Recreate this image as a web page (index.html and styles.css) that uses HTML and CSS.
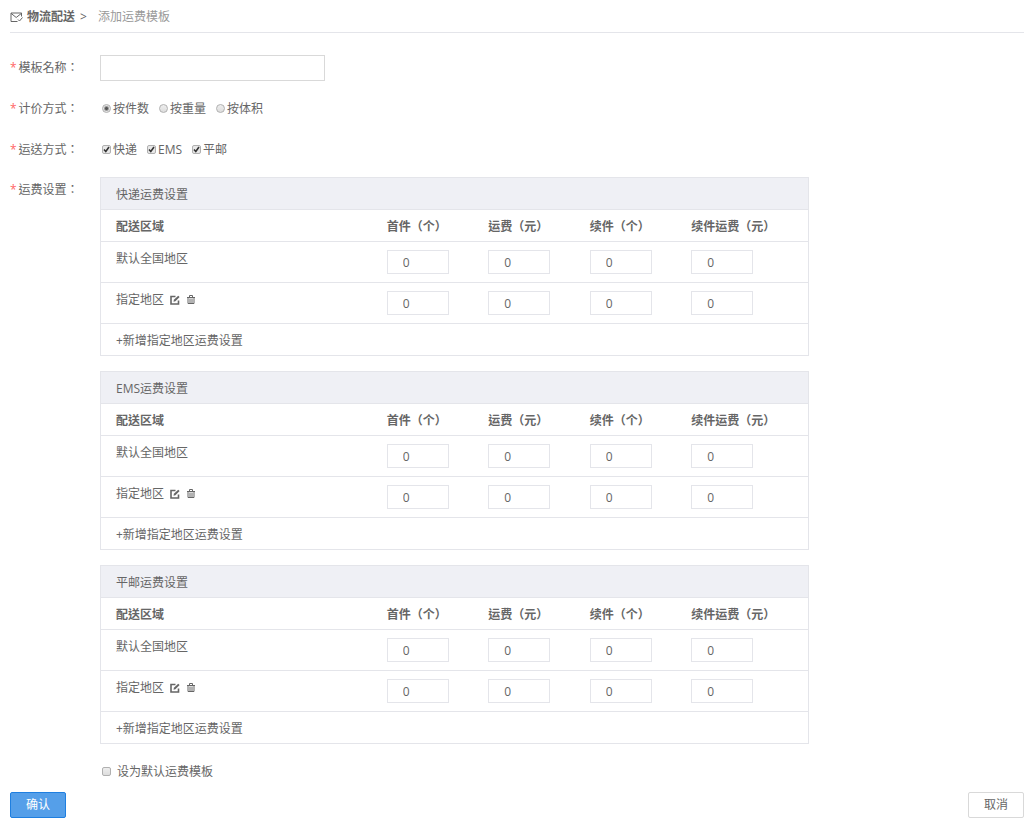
FILE: index.html
```html
<!DOCTYPE html>
<html lang="zh-CN">
<head>
  <meta charset="UTF-8">
  <meta name="viewport" content="width=device-width, initial-scale=1.0">
  <title>添加运费模板</title>
  <link rel="stylesheet" href="styles.css">
</head>
<body>

<svg class="sprite" aria-hidden="true">
  <symbol id="icon-edit" viewBox="0 0 10 10">
    <path d="M5.500 1.500H1V9h7.500V5.500" fill="none" stroke="currentColor" stroke-width="1.600"/>
    <path d="M3.500 6.800l.4-2L8.200.8l1.400 1.300-4.200 4.100z" fill="currentColor"/>
  </symbol>
  <symbol id="icon-trash" viewBox="0 0 10 10">
    <path d="M1 2.500h8M3.500 2V.5h3V2M2 2.500v6h6v-6M4 3.500V8M6 3.500V8" fill="none" stroke="currentColor"/>
  </symbol>
</svg>

<div class="page">
  <div class="crumb">
    <svg class="icon-mail" viewBox="0 0 13 11" aria-hidden="true">
      <path d="M11.500 4.500V1H1v8.500h6.500M1 1.300l5.200 4.200L11.500 1.300M8 7.500l1.500 1.500L12.500 5.500" fill="none" stroke="currentColor"/>
    </svg>
    <a href="#" class="crumb-link">物流配送</a>
    <span class="crumb-sep">&gt;</span>
    <span class="crumb-current">添加运费模板</span>
  </div>

  <form>
    <div class="row">
      <label class="row-label" for="name"><i>*</i>模板名称：</label>
      <input type="text" class="name-input" id="name" name="name">
    </div>

    <div class="row" role="radiogroup" aria-labelledby="priceLabel">
      <span class="row-label" id="priceLabel"><i>*</i>计价方式：</span>
      <div class="options">
        <label class="option"><input type="radio" name="price" value="1" checked>按件数</label>
        <label class="option"><input type="radio" name="price" value="2">按重量</label>
        <label class="option"><input type="radio" name="price" value="3">按体积</label>
      </div>
    </div>

    <div class="row" role="group" aria-labelledby="shipLabel">
      <span class="row-label" id="shipLabel"><i>*</i>运送方式：</span>
      <div class="options">
        <label class="option"><input type="checkbox" name="express" checked>快递</label>
        <label class="option"><input type="checkbox" name="ems" checked>EMS</label>
        <label class="option"><input type="checkbox" name="post" checked>平邮</label>
      </div>
    </div>

    <div class="row row-freight">
      <span class="row-label"><i>*</i>运费设置：</span>
      <div class="freight-list">

        <div class="freight">
          <h3 class="freight-title">快递运费设置</h3>
          <table>
            <thead>
              <tr><th class="area">配送区域</th><th>首件（个）</th><th>运费（元）</th><th>续件（个）</th><th class="last">续件运费（元）</th></tr>
            </thead>
            <tbody>
              <tr>
                <td>默认全国地区</td>
                <td><input type="text" value="0" aria-label="首件"></td>
                <td><input type="text" value="0" aria-label="运费"></td>
                <td><input type="text" value="0" aria-label="续件"></td>
                <td><input type="text" value="0" aria-label="续件运费"></td>
              </tr>
              <tr>
                <td>
                  <div class="area-cell">指定地区
                    <button type="button" class="icon-btn" aria-label="编辑"><svg><use href="#icon-edit"/></svg></button>
                    <button type="button" class="icon-btn" aria-label="删除"><svg><use href="#icon-trash"/></svg></button>
                  </div>
                </td>
                <td><input type="text" value="0" aria-label="首件"></td>
                <td><input type="text" value="0" aria-label="运费"></td>
                <td><input type="text" value="0" aria-label="续件"></td>
                <td><input type="text" value="0" aria-label="续件运费"></td>
              </tr>
            </tbody>
          </table>
          <a href="#" class="add-area">+新增指定地区运费设置</a>
        </div>

        <div class="freight">
          <h3 class="freight-title">EMS运费设置</h3>
          <table>
            <thead>
              <tr><th class="area">配送区域</th><th>首件（个）</th><th>运费（元）</th><th>续件（个）</th><th class="last">续件运费（元）</th></tr>
            </thead>
            <tbody>
              <tr>
                <td>默认全国地区</td>
                <td><input type="text" value="0" aria-label="首件"></td>
                <td><input type="text" value="0" aria-label="运费"></td>
                <td><input type="text" value="0" aria-label="续件"></td>
                <td><input type="text" value="0" aria-label="续件运费"></td>
              </tr>
              <tr>
                <td>
                  <div class="area-cell">指定地区
                    <button type="button" class="icon-btn" aria-label="编辑"><svg><use href="#icon-edit"/></svg></button>
                    <button type="button" class="icon-btn" aria-label="删除"><svg><use href="#icon-trash"/></svg></button>
                  </div>
                </td>
                <td><input type="text" value="0" aria-label="首件"></td>
                <td><input type="text" value="0" aria-label="运费"></td>
                <td><input type="text" value="0" aria-label="续件"></td>
                <td><input type="text" value="0" aria-label="续件运费"></td>
              </tr>
            </tbody>
          </table>
          <a href="#" class="add-area">+新增指定地区运费设置</a>
        </div>

        <div class="freight">
          <h3 class="freight-title">平邮运费设置</h3>
          <table>
            <thead>
              <tr><th class="area">配送区域</th><th>首件（个）</th><th>运费（元）</th><th>续件（个）</th><th class="last">续件运费（元）</th></tr>
            </thead>
            <tbody>
              <tr>
                <td>默认全国地区</td>
                <td><input type="text" value="0" aria-label="首件"></td>
                <td><input type="text" value="0" aria-label="运费"></td>
                <td><input type="text" value="0" aria-label="续件"></td>
                <td><input type="text" value="0" aria-label="续件运费"></td>
              </tr>
              <tr>
                <td>
                  <div class="area-cell">指定地区
                    <button type="button" class="icon-btn" aria-label="编辑"><svg><use href="#icon-edit"/></svg></button>
                    <button type="button" class="icon-btn" aria-label="删除"><svg><use href="#icon-trash"/></svg></button>
                  </div>
                </td>
                <td><input type="text" value="0" aria-label="首件"></td>
                <td><input type="text" value="0" aria-label="运费"></td>
                <td><input type="text" value="0" aria-label="续件"></td>
                <td><input type="text" value="0" aria-label="续件运费"></td>
              </tr>
            </tbody>
          </table>
          <a href="#" class="add-area">+新增指定地区运费设置</a>
        </div>

        <label class="option option-default"><input type="checkbox" name="isDefault">设为默认运费模板</label>
      </div>
    </div>

    <div class="actions">
      <button type="submit" class="btn btn-primary">确认</button>
      <button type="button" class="btn">取消</button>
    </div>
  </form>
</div>

</body>
</html>
```
FILE: styles.css
```css
* {
  box-sizing: border-box;
}
body {
  margin: 0;
  font: 12px/18px "Open Sans", "Noto Sans CJK SC", sans-serif;
  color: #666;
  background: #fff;
}
input, button {
  font: inherit;
  color: inherit;
}
a {
  color: inherit;
  text-decoration: none;
}
.sprite {
  display: none;
}
.page {
  padding: 0 9px 8px 10px;
}

/* breadcrumb */
.crumb {
  display: flex;
  align-items: center;
  height: 33px;
  padding-top: 2px;
  border-bottom: 1px solid #e4e5ea;
  margin-bottom: 22px;
}
.icon-mail {
  width: 13px;
  height: 11px;
  margin-right: 4px;
}
.crumb-link {
  font-weight: bold;
  margin-right: 5px;
}
.crumb-sep {
  margin-right: 11px;
}
.crumb-current {
  color: #999;
}

/* form rows */
.row {
  display: flex;
  align-items: flex-start;
  margin-bottom: 15px;
}
.row-label {
  width: 90px;
  flex: none;
  line-height: 26px;
}
/* centred full-width punctuation */
.row-label, .freight th {
  font-family: "Open Sans", "Noto Sans CJK TC", sans-serif;
  font-feature-settings: "locl" 0;
}
.row-label i {
  font-style: normal;
  color: #f66;
  margin-right: 2px;
}
.name-input {
  width: 225px;
  height: 26px;
  padding: 0 10px;
  border: 1px solid #d9d9d9;
}
.options {
  display: flex;
  gap: 10px;
  padding-left: 2px;
}
.option {
  display: flex;
  align-items: center;
  gap: 2px;
  line-height: 26px;
}
.option input {
  appearance: none;
  width: 9px;
  height: 9px;
  margin: 0 0 1px;
  border: 1px solid #b0b0b0;
  border-radius: 2px;
  background: linear-gradient(#eee, #ddd);
}
.option input[type="radio"] {
  border-radius: 50%;
}
.option input[type="radio"]:checked {
  background: radial-gradient(circle, #555 1px, #e4e4e4 3px);
}
.option input[type="checkbox"]:checked {
  background: #e8e8e8 url("data:image/svg+xml,%3Csvg xmlns='http://www.w3.org/2000/svg' viewBox='0 0 7 7'%3E%3Cpath d='M1 3.500l1.800 2L6 1' fill='none' stroke='%23333' stroke-width='1.600'/%3E%3C/svg%3E") center / 7px 7px no-repeat;
}

/* freight tables */
.row-freight {
  margin-top: -1px;
  margin-bottom: 7px;
}
.freight-list {
  flex: 1;
}
.freight {
  width: 76.7%;
  border: 1px solid #e4e5ea;
  margin-bottom: 15px;
}
.freight-title {
  margin: 0;
  padding: 8px 15px 5px;
  font-size: 12px;
  font-weight: normal;
  background: #eff0f5;
  border-bottom: 1px solid #e4e5ea;
}
.freight table {
  width: 100%;
  table-layout: fixed;
  border-collapse: separate;
  border-spacing: 0;
}
.freight th, .freight td {
  padding: 8px 15px;
  text-align: left;
  vertical-align: top;
  border-bottom: 1px solid #e4e5ea;
}
.freight th {
  padding-bottom: 5px;
  white-space: nowrap;
}
.freight .area {
  width: 38.3%;
}
.freight .last {
  width: 18.6%;
}
.freight td input {
  display: block;
  width: 62px;
  height: 24px;
  padding: 0 15px;
  border: 1px solid #e4e5ea;
}
.area-cell {
  display: flex;
  align-items: center;
  gap: 6px;
}
.icon-btn {
  width: 10px;
  height: 10px;
  padding: 0;
  border: 0;
  background: none;
  cursor: pointer;
}
.icon-btn svg {
  display: block;
  width: 10px;
  height: 10px;
}
.add-area {
  display: block;
  padding: 8px 15px 5px;
}
.option-default {
  gap: 6px;
  padding-left: 2px;
}

/* buttons */
.actions {
  display: flex;
  justify-content: space-between;
}
.btn {
  width: 56px;
  height: 26px;
  padding: 0;
  border: 1px solid #d9d9d9;
  border-radius: 2px;
  background: #fff;
  cursor: pointer;
}
.btn-primary {
  color: #fff;
  background: #559fe9;
  border-color: #1f7fe0;
}
```
